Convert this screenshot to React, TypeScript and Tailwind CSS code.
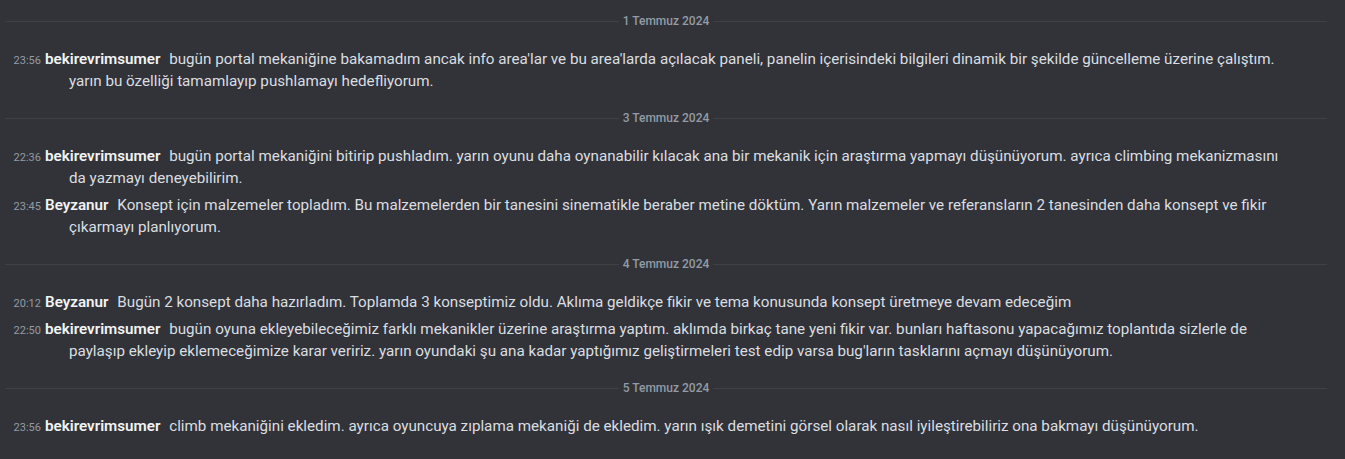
import React from "react";

type Msg = { time: string; user: string; text: string };
type Section = { date: string; msgs: Msg[] };

const B = "bekirevrimsumer";
const Z = "Beyzanur";

const sections: Section[] = [
  {
    date: "1 Temmuz 2024",
    msgs: [
      {
        time: "23:56",
        user: B,
        text: "bugün portal mekaniğine bakamadım ancak info area'lar ve bu area'larda açılacak paneli, panelin içerisindeki bilgileri dinamik bir şekilde güncelleme üzerine çalıştım. yarın bu özelliği tamamlayıp pushlamayı hedefliyorum.",
      },
    ],
  },
  {
    date: "3 Temmuz 2024",
    msgs: [
      {
        time: "22:36",
        user: B,
        text: "bugün portal mekaniğini bitirip pushladım. yarın oyunu daha oynanabilir kılacak ana bir mekanik için araştırma yapmayı düşünüyorum. ayrıca climbing mekanizmasını da yazmayı deneyebilirim.",
      },
      {
        time: "23:45",
        user: Z,
        text: "Konsept için malzemeler topladım. Bu malzemelerden bir tanesini sinematikle beraber metine döktüm. Yarın malzemeler ve referansların 2 tanesinden daha konsept ve fikir çıkarmayı planlıyorum.",
      },
    ],
  },
  {
    date: "4 Temmuz 2024",
    msgs: [
      {
        time: "20:12",
        user: Z,
        text: "Bugün 2 konsept daha hazırladım. Toplamda 3 konseptimiz oldu. Aklıma geldikçe fikir ve tema konusunda konsept üretmeye devam edeceğim",
      },
      {
        time: "22:50",
        user: B,
        text: "bugün oyuna ekleyebileceğimiz farklı mekanikler üzerine araştırma yaptım. aklımda birkaç tane yeni fikir var. bunları haftasonu yapacağımız toplantıda sizlerle de paylaşıp ekleyip eklemeceğimize karar veririz. yarın oyundaki şu ana kadar yaptığımız geliştirmeleri test edip varsa bug'ların tasklarını açmayı düşünüyorum.",
      },
    ],
  },
  {
    date: "5 Temmuz 2024",
    msgs: [
      {
        time: "23:56",
        user: B,
        text: "climb mekaniğini ekledim. ayrıca oyuncuya zıplama mekaniği de ekledim. yarın ışık demetini görsel olarak nasıl iyileştirebiliriz ona bakmayı düşünüyorum.",
      },
    ],
  },
];

function Divider({ date, first }: { date: string; first: boolean }) {
  return (
    <div
      className={`flex items-center h-[17px] ml-[5px] mr-[18px] mb-[16px] ${first ? "mt-[13px]" : "mt-[15px]"}`}
    >
      <div className="flex-1 h-px bg-[#3f4147]" />
      <span className="px-1 text-[12px] leading-[17px] font-medium text-[#949ba4]">{date}</span>
      <div className="flex-1 h-px bg-[#3f4147]" />
    </div>
  );
}

function Message({ m }: { m: Msg }) {
  return (
    <div className="pt-[2px] pb-[3px] pl-[69px] pr-[50px] -indent-[56px] text-[15.2px] leading-[22px] text-[#dbdee1]">
      <span className="inline-block w-[28px] indent-0 text-right mr-[4px] text-[11px] leading-none text-[#949ba4]">
        {m.time}
      </span>
      <span className="font-semibold text-[#f2f3f5] mr-[5px]">{m.user}</span> {m.text}
    </div>
  );
}

export default function App() {
  return (
    <div
      className="w-[1345px] h-[459px] overflow-hidden bg-[#313338]"
      style={{ fontFamily: "Roboto, 'Noto Sans', sans-serif" }}
    >
      {sections.map((s, i) => (
        <div key={s.date}>
          <Divider date={s.date} first={i === 0} />
          {s.msgs.map((m, j) => (
            <Message key={j} m={m} />
          ))}
        </div>
      ))}
    </div>
  );
}
